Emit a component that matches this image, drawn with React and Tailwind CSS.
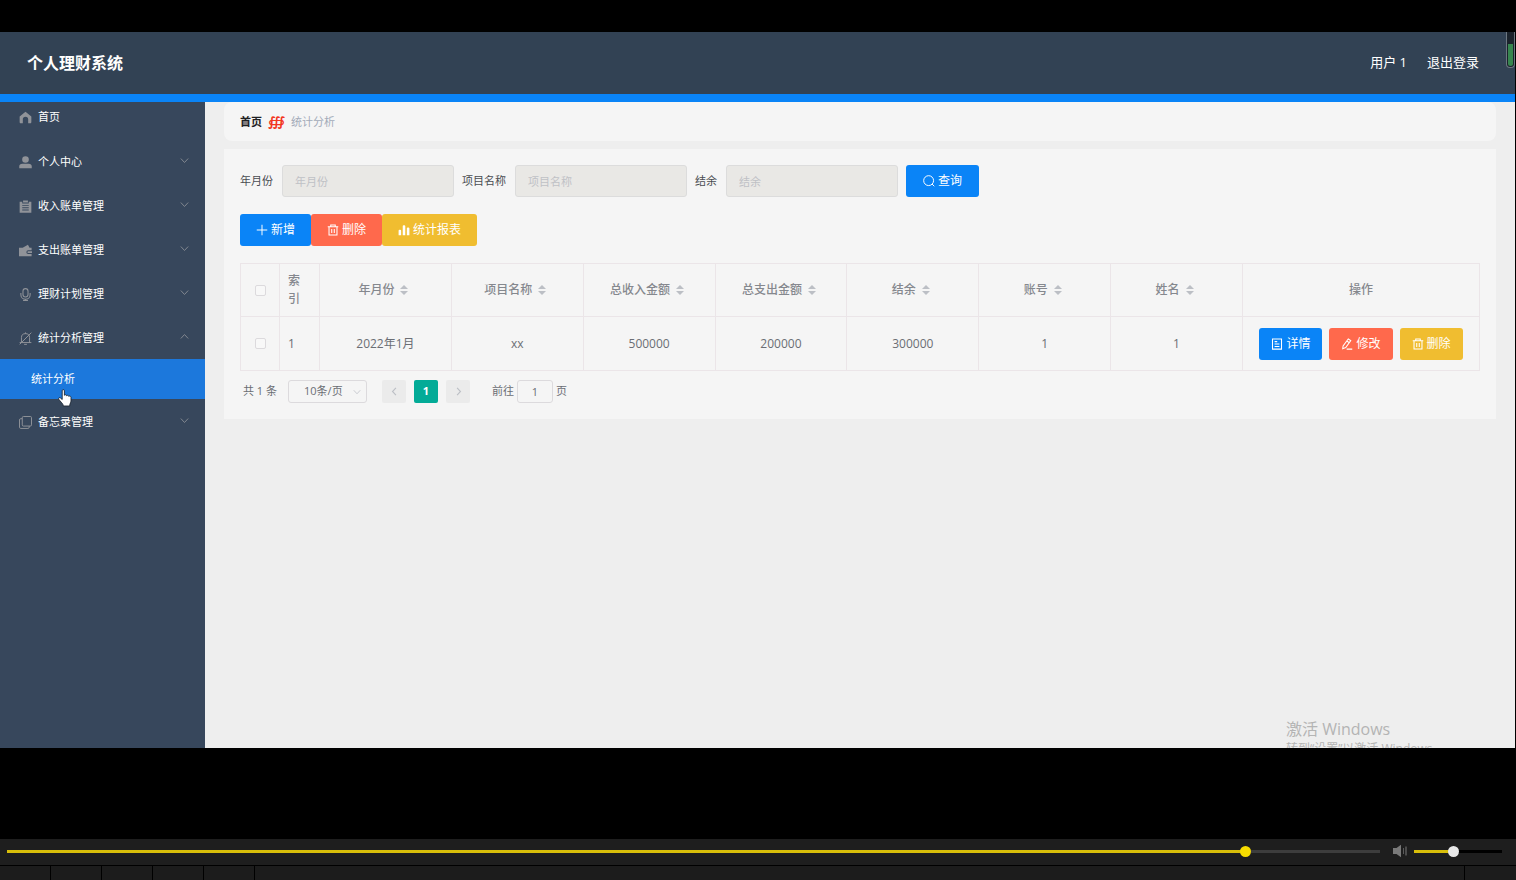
import { useState } from 'react'
import clsx from 'clsx'

const MENU = [
  { icon: 'user', label: '个人中心' },
  { icon: 'order', label: '收入账单管理' },
  { icon: 'wallet', label: '支出账单管理' },
  { icon: 'mic', label: '理财计划管理' },
  { icon: 'bell', label: '统计分析管理', children: ['统计分析'] },
  { icon: 'copy', label: '备忘录管理' },
]

const COLUMNS = ['年月份', '项目名称', '总收入金额', '总支出金额', '结余', '账号', '姓名']

const ROWS = [
  ['2022年1月', 'xx', '500000', '200000', '300000', '1', '1'],
]

const ICONS = {
  home: <path fill="currentColor" d="M8 .8.8 6.800V13.500c0 .9.500 1.500 1.400 1.500h2.500V10.300a3.300 3.300 0 0 1 6.600 0V15h2.500c.9 0 1.400-.6 1.400-1.500V6.800z" />,
  user: <path fill="currentColor" d="M8 .2a4.100 4.100 0 1 1 0 8.200A4.100 4.100 0 0 1 8 .2zM4 9.500h8c2.200 0 3.700 1.200 3.700 3.200v2.500H.3v-2.500c0-2 1.500-3.200 3.700-3.200z" />,
  order: <path fill="currentColor" fillRule="evenodd" d="M.8 2H4v2.200h8V2h3.200v13.800H.8zM5 .5h6v2.700H5zM4 6v1.200h8V6zm0 2.800V10h8V8.800zm0 2.800v1.200h8v-1.200z" />,
  wallet: <path fill="currentColor" fillRule="evenodd" d="M0 4.500h4.500L11 .8 13 4.500h2.500v3.300h-4.200a2.200 2.200 0 0 0 0 4.400h4.200V15H0zM11.300 9H16v2h-4.700a1 1 0 0 1 0-2z" />,
  mic: (
    <g stroke="currentColor" strokeWidth="1.300">
      <rect x="4.900" y="0.800" width="6.200" height="10.200" rx="3.100" />
      <path d="M2.300 6v2.200a5.700 5.700 0 0 0 11.400 0V6M8 13.800v2M5 15.400h6" />
    </g>
  ),
  bell: (
    <g stroke="currentColor" strokeWidth="1.200">
      <path d="M3 13V7a5 5 0 0 1 10 0v6M.8 13h14.400M6.300 15.200h3.400M8 2.300V.5M.8 15.200 15.200.8" />
    </g>
  ),
  copy: (
    <g stroke="currentColor" strokeWidth="1.200">
      <rect x="4" y="0.600" width="11.400" height="11.800" rx="1.500" />
      <path d="M4 3.300H2.200C1.200 3.300.6 3.900.6 4.900v8.900c0 .9.600 1.500 1.600 1.500H11c1 0 1.600-.6 1.600-1.500v-1.400" />
    </g>
  ),
  down: <path stroke="currentColor" strokeWidth="1.500" d="m1.500 4.500 6.500 7 6.500-7" />,
  up: <path stroke="currentColor" strokeWidth="1.500" d="m1.500 11.500 6.500-7 6.500 7" />,
  left: <path stroke="currentColor" strokeWidth="2" d="m10.500 1.500-6 6.500 6 6.500" />,
  right: <path stroke="currentColor" strokeWidth="2" d="m5.500 1.500 6 6.500-6 6.500" />,
  search: (
    <g stroke="currentColor" strokeWidth="1.300">
      <circle cx="7.500" cy="7.500" r="6.600" />
      <path d="m12 12 3 3" />
    </g>
  ),
  plus: <path stroke="currentColor" strokeWidth="1.300" d="M8 1v14M1 8h14" />,
  trash: (
    <g stroke="currentColor" strokeWidth="1.400">
      <path d="M1 3.700h14M5 3.700V1.300h6v2.400M2.700 3.700v11h10.600v-11M6.300 6.500v5.500M9.700 6.500v5.500" />
    </g>
  ),
  chart: <path fill="currentColor" d="M.8 9c0-1.900 3.400-1.900 3.400 0v6H.8zM6.300 3c0-1.900 3.400-1.900 3.400 0v12H6.300zM11.800 6c0-1.900 3.400-1.900 3.400 0v9h-3.400z" />,
  doc: (
    <g stroke="currentColor" strokeWidth="1.400">
      <path d="M2 1.200h12v13.600H2zM4.800 4.800h3.500M4.800 8h6.400M4.800 11.200h6.400" />
    </g>
  ),
  edit: (
    <g stroke="currentColor" strokeWidth="1.400">
      <path d="M9.700 1.300 13 3.500 6.300 12.800 2.300 14.300 2.800 10.500zM7.800 4l3.300 2.300M7.500 14.800H15" />
    </g>
  ),
}

function Icon({ name, className }) {
  return (
    <svg viewBox="0 0 16 16" fill="none" aria-hidden="true" className={clsx('shrink-0', className)}>
      {ICONS[name]}
    </svg>
  )
}

function Button({ icon, children, className }) {
  return (
    <button
      type="button"
      className={clsx('flex h-8 items-center gap-[3px] rounded-[3px] text-xs text-white cursor-pointer', className)}
    >
      <Icon name={icon} className="size-3" />
      {children}
    </button>
  )
}

function SearchField({ id, label }) {
  return (
    <div className="flex items-center gap-[9px]">
      <label htmlFor={id} className="text-[11px] text-[#4a4d52]">{label}</label>
      <input
        id={id}
        type="text"
        placeholder={label}
        className="h-8 w-[172px] rounded-[3px] border border-[#dcdcdc] bg-[#e9e8e5] px-3 text-[11px] outline-none placeholder:text-[#bfc1c6]"
      />
    </div>
  )
}

function SortCaret() {
  return (
    <svg viewBox="0 0 8 10" aria-hidden="true" className="h-[10px] w-2 fill-[#bcbfc5]">
      <path d="M4 0 8 4H0zM4 10 0 6h8z" />
    </svg>
  )
}

function Checkbox({ label }) {
  return (
    <input
      type="checkbox"
      aria-label={label}
      className="block mx-auto size-[11px] appearance-none rounded-[2px] border border-[#dcdadd] bg-[#f8f8f8] checked:bg-[#0a84f7]"
    />
  )
}

function HandCursor() {
  return (
    <svg viewBox="0 0 14 18" aria-hidden="true" className="pointer-events-none absolute left-[58px] top-[30px] z-10 h-[18px] w-[14px]">
      <path
        fill="#fff"
        stroke="#1d2733"
        strokeWidth="0.9"
        strokeLinejoin="round"
        d="M4.200 1.700C4.200.3 6.400.3 6.400 1.700v4.600c.5-.9 2-.7 2.200.4.600-.7 1.900-.4 2.100.6.800-.6 2.300-.1 2.300 1.200v3.600c0 1.400-.9 2.200-1.100 3.200l-.2 1.700H5.300l-.3-1.300C4.500 14.200 2.500 12.700.8 10.300c-.8-1.200.7-2.200 1.700-1.300l1.700 1.500z"
      />
    </svg>
  )
}

function Header() {
  return (
    <header className="flex h-[70px] shrink-0 items-center justify-between border-b-8 border-[#0a84f7] bg-[#324254] pl-[27px] pr-9 text-[13px] text-white">
      <h1 className="text-base font-bold">个人理财系统</h1>
      <div className="flex items-center gap-5">
        <span>用户 1</span>
        <button type="button" className="cursor-pointer">退出登录</button>
      </div>
    </header>
  )
}

function Sidebar() {
  return (
    <nav className="w-[205px] shrink-0 bg-[#37475c] text-[11px] text-white">
      <a href="#home" className="flex h-[37px] items-center gap-[6px] pb-[6px] pl-[19px]">
        <Icon name="home" className="size-[13px] text-[#909399]" />
        首页
      </a>
      {MENU.map(item => (
        <div key={item.label}>
          <button type="button" className="flex h-11 w-full items-center gap-[6px] pl-[19px] pr-4 pt-[2px] cursor-pointer">
            <Icon name={item.icon} className="size-[13px] text-[#909399]" />
            {item.label}
            <Icon name={item.children ? 'up' : 'down'} className="mb-1 ml-auto size-[9px] text-[#909399]" />
          </button>
          {item.children?.map(child => (
            <a key={child} href="#statistics" className="relative flex h-10 items-center bg-[#1c78dc] pl-[31px]">
              {child}
              <HandCursor />
            </a>
          ))}
        </div>
      ))}
    </nav>
  )
}

function DataTable() {
  return (
    <table className="w-full table-fixed border-collapse text-center text-xs text-[#6b6e74] [&_td]:border [&_td]:border-[#ebe5e8] [&_th]:border [&_th]:border-[#ebe5e8]">
      <colgroup>
        <col className="w-[39px]" />
        <col className="w-10" />
        {COLUMNS.map(name => <col key={name} />)}
        <col className="w-[237px]" />
      </colgroup>
      <thead className="text-[#85888e]">
        <tr className="h-[53px]">
          <th><Checkbox label="全选" /></th>
          <th className="px-2 text-left font-medium leading-[18px]">索引</th>
          {COLUMNS.map(name => (
            <th key={name} className="pr-1 font-medium">
              <div className="flex items-center justify-center gap-[6px]">
                {name}
                <SortCaret />
              </div>
            </th>
          ))}
          <th className="font-medium">操作</th>
        </tr>
      </thead>
      <tbody>
        {ROWS.map((row, i) => (
          <tr key={i} className="h-[54px]">
            <td><Checkbox label="选择" /></td>
            <td className="px-2 text-left">{i + 1}</td>
            {row.map((value, j) => <td key={j}>{value}</td>)}
            <td>
              <div className="flex justify-center gap-[7px]">
                <Button icon="doc" className="bg-[#0a84f7] px-3">详情</Button>
                <Button icon="edit" className="bg-[#ff694c] px-3">修改</Button>
                <Button icon="trash" className="bg-[#f0bd30] px-3">删除</Button>
              </div>
            </td>
          </tr>
        ))}
      </tbody>
    </table>
  )
}

function Pagination() {
  return (
    <div className="flex items-center pl-[3px] pt-[9px] text-[11px] text-[#6b6e74]">
      <span>共 1 条</span>
      <div className="relative ml-[11px] mr-[15px]">
        <select aria-label="每页条数" className="block h-[23px] w-[79px] appearance-none rounded-[3px] border border-[#dcdadd] pl-[15px]">
          <option>10条/页</option>
        </select>
        <Icon name="down" className="pointer-events-none absolute right-[6px] top-2 size-2 text-[#bcbfc5]" />
      </div>
      <div className="flex gap-2">
        <button type="button" aria-label="上一页" className="flex h-[23px] w-6 items-center justify-center rounded-[2px] bg-[#ebebeb] text-[#bcbfc5]">
          <Icon name="left" className="size-[9px]" />
        </button>
        <button type="button" className="h-[23px] w-6 rounded-[2px] bg-[#03ab97] font-bold text-white">1</button>
        <button type="button" aria-label="下一页" className="flex h-[23px] w-6 items-center justify-center rounded-[2px] bg-[#ebebeb] text-[#bcbfc5]">
          <Icon name="right" className="size-[9px]" />
        </button>
      </div>
      <label className="ml-[22px] flex items-center gap-[3px]">
        前往
        <input type="text" defaultValue="1" className="h-[23px] w-9 rounded-[3px] border border-[#dcdadd] text-center outline-none" />
        页
      </label>
    </div>
  )
}

function PlayerBar() {
  const [progress, setProgress] = useState(905)
  const [volume, setVolume] = useState(44)

  return (
    <footer className="shrink-0">
      <div className="flex h-[26px] items-center bg-[#1e1e1e] pb-[2px] pl-[7px] pr-[14px]">
        <input
          type="range"
          aria-label="播放进度"
          min="0"
          max="1000"
          value={progress}
          onChange={e => setProgress(Number(e.target.value))}
          style={{ '--fill': `${progress / 10}%` }}
          className="h-3 min-w-0 flex-1 appearance-none bg-transparent [&::-webkit-slider-runnable-track]:h-[3px] [&::-webkit-slider-runnable-track]:bg-[linear-gradient(to_right,#d8be0a_var(--fill),#3d3d3d_var(--fill))] [&::-webkit-slider-thumb]:-mt-1 [&::-webkit-slider-thumb]:size-[11px] [&::-webkit-slider-thumb]:appearance-none [&::-webkit-slider-thumb]:rounded-full [&::-webkit-slider-thumb]:bg-[#f7dc00]"
        />
        <svg viewBox="0 0 15 14" aria-hidden="true" className="ml-3 mr-[7px] h-[14px] w-[15px]">
          <path fill="#7a7a7a" d="M1 4h3.500L9 .8v12.400L4.500 10H1z" />
          <path stroke="#5a5a5a" d="M11.500 4v6" />
          <path stroke="#7a7a7a" d="M14 2.500v9" />
        </svg>
        <input
          type="range"
          aria-label="音量"
          min="0"
          max="100"
          value={volume}
          onChange={e => setVolume(Number(e.target.value))}
          style={{ '--fill': `${volume}%` }}
          className="h-3 w-[88px] appearance-none bg-transparent [&::-webkit-slider-runnable-track]:h-[3px] [&::-webkit-slider-runnable-track]:bg-[linear-gradient(to_right,#d8be0a_var(--fill),#000_var(--fill))] [&::-webkit-slider-thumb]:-mt-1 [&::-webkit-slider-thumb]:size-[11px] [&::-webkit-slider-thumb]:appearance-none [&::-webkit-slider-thumb]:rounded-full [&::-webkit-slider-thumb]:bg-[#e8e8e8]"
        />
      </div>
      <div className="mt-px flex h-[14px] gap-px">
        {[1, 2, 3, 4, 5].map(n => <div key={n} className="w-[50px] bg-[#1c1c1c]" />)}
        <div className="flex-1 bg-[#1c1c1c]" />
        <div className="w-[51px] bg-[#1c1c1c]" />
      </div>
    </footer>
  )
}

export default function App() {
  return (
    <div className="flex h-screen flex-col bg-black pt-8 font-['Open_Sans','Noto_Sans_CJK_SC',sans-serif]">
      <div className="relative mr-px flex min-h-0 flex-1 flex-col overflow-hidden bg-[#eee]">
        <Header />
        <div className="flex flex-1">
          <Sidebar />
          <main className="min-w-0 flex-1 px-[19px]">
            <div className="flex h-[39px] items-center gap-[6px] rounded-lg bg-[#f5f5f5] px-4 pt-px text-[11px]">
              <a href="#home" className="font-bold text-[#1f2124]">首页</a>
              <span className="font-['DejaVu_Serif','DejaVu_Sans',serif] text-[13px] font-bold leading-4 text-[#f2371f]">∰</span>
              <span className="text-[#a3abb9]">统计分析</span>
            </div>
            <section className="mt-2 bg-[#f5f5f5] px-4 pb-4 pt-4">
              <form className="flex items-center gap-2" onSubmit={e => e.preventDefault()}>
                <SearchField id="month" label="年月份" />
                <SearchField id="project" label="项目名称" />
                <SearchField id="balance" label="结余" />
                <Button icon="search" className="bg-[#0a84f7] px-[17px]">查询</Button>
              </form>
              <div className="my-[17px] flex">
                <Button icon="plus" className="bg-[#0a84f7] px-4">新增</Button>
                <Button icon="trash" className="bg-[#ff694c] px-4">删除</Button>
                <Button icon="chart" className="bg-[#f0bd30] px-4">统计报表</Button>
              </div>
              <DataTable />
              <Pagination />
            </section>
          </main>
        </div>

        {/* battery gauge */}
        <div className="absolute right-0 top-0 flex h-9 w-[9px] flex-col rounded-b border border-t-0 border-[#6d7781] bg-[#1b232c] p-px pt-3">
          <div className="flex-1 rounded-b-sm bg-[#37864f]" />
        </div>

        <div className="pointer-events-none absolute left-[calc(100%-229px)] top-[calc(100%-31px)] whitespace-nowrap text-[#b4b4b4]">
          <p className="text-base leading-6">激活 Windows</p>
          <p className="text-xs leading-4">转到“设置”以激活 Windows。</p>
        </div>
      </div>
      <div className="h-[91px] shrink-0" />
      <PlayerBar />
    </div>
  )
}
